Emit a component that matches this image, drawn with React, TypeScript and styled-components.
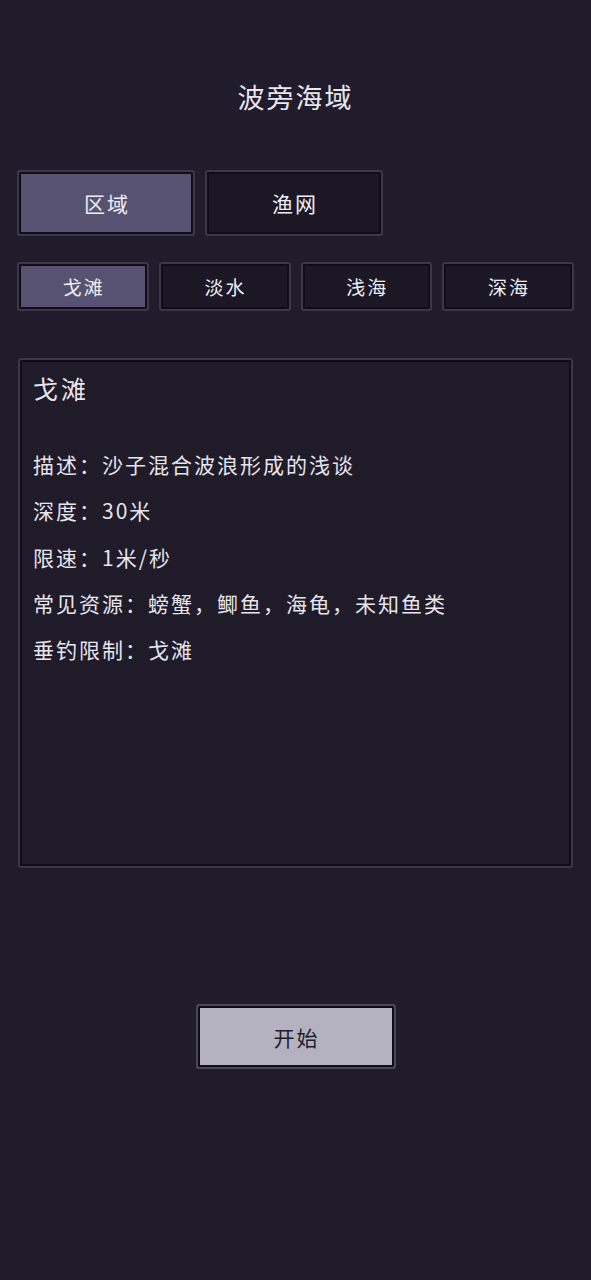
import React, { useState } from 'react';
import styled, { createGlobalStyle } from 'styled-components';

const GlobalStyle = createGlobalStyle`
  html, body {
    margin: 0;
    padding: 0;
    background: #201c2b;
  }
  body {
    font-family: "Noto Sans CJK SC", "Noto Sans", sans-serif;
    color: #e6e4ec;
  }
`;

const Page = styled.div`
  min-height: 1280px;
  padding: 0 17px;
  box-sizing: border-box;
  display: flex;
  flex-direction: column;
`;

const Title = styled.h1`
  margin: 80px 0 0;
  text-align: center;
  font-size: 27px;
  font-weight: 400;
  letter-spacing: 2px;
  line-height: 34px;
  color: #e8e6ee;
`;

const Row = styled.div<{ cols: string; top: number; height: number }>`
  display: grid;
  grid-template-columns: ${(p) => p.cols};
  gap: 10px;
  margin-top: ${(p) => p.top}px;
  height: ${(p) => p.height}px;
`;

const Tab = styled.button<{ active: boolean; size: number }>`
  font-family: inherit;
  font-size: ${(p) => p.size}px;
  letter-spacing: 2px;
  color: #eeedf3;
  background: ${(p) => (p.active ? '#575272' : '#1b1724')};
  border: 2px solid #3a3749;
  border-radius: 3px;
  box-shadow: inset 0 0 0 2px #0f0d15;
  padding: 0 0 0 2px;
  cursor: pointer;
`;

const Panel = styled.div`
  margin: 47px 1px 0;
  height: 510px;
  box-sizing: border-box;
  border: 2px solid #3a3749;
  border-radius: 3px;
  box-shadow: inset 0 0 0 2px #0f0d15;
  background: #1f1b29;
  padding: 12px 13px;
`;

const PanelTitle = styled.div`
  font-size: 25px;
  letter-spacing: 3px;
  line-height: 32px;
  margin-bottom: 37px;
`;

const Line = styled.div`
  font-size: 21px;
  letter-spacing: 2px;
  line-height: 46.3px;
  white-space: nowrap;
`;

const StartButton = styled.button`
  align-self: center;
  margin-top: 136px;
  width: 200px;
  height: 65px;
  font-family: inherit;
  font-size: 21px;
  letter-spacing: 2px;
  padding: 0 0 0 2px;
  color: #221e2c;
  background: #b5b2bf;
  border: 2px solid #4a4759;
  border-radius: 3px;
  box-shadow: inset 0 0 0 2px #0f0d15;
  cursor: pointer;
`;

const modes = ['区域', '渔网'];
const zones = ['戈滩', '淡水', '浅海', '深海'];

const lines = [
  '描述：沙子混合波浪形成的浅谈',
  '深度：30米',
  '限速：1米/秒',
  '常见资源：螃蟹，鲫鱼，海龟，未知鱼类',
  '垂钓限制：戈滩',
];

export default function App() {
  const [mode, setMode] = useState(0);
  const [zone, setZone] = useState(0);

  return (
    <Page>
      <GlobalStyle />
      <Title>波旁海域</Title>
      <Row cols="178px 178px" top={56} height={66}>
        {modes.map((m, i) => (
          <Tab key={m} size={21} active={mode === i} onClick={() => setMode(i)}>
            {m}
          </Tab>
        ))}
      </Row>
      <Row cols="repeat(4, 1fr)" top={26} height={49}>
        {zones.map((z, i) => (
          <Tab key={z} size={19} active={zone === i} onClick={() => setZone(i)}>
            {z}
          </Tab>
        ))}
      </Row>
      <Panel>
        <PanelTitle>{zones[zone]}</PanelTitle>
        {lines.map((l) => (
          <Line key={l}>{l}</Line>
        ))}
      </Panel>
      <StartButton>开始</StartButton>
    </Page>
  );
}
